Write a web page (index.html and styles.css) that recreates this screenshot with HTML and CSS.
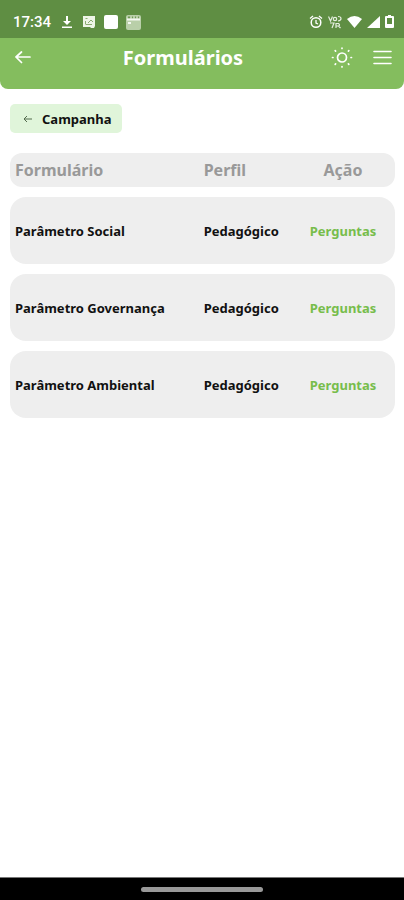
FILE: index.html
```html
<!DOCTYPE html>
<html lang="pt-BR">
<head>
<meta charset="utf-8">
<meta name="viewport" content="width=device-width, initial-scale=1">
<title>Formulários</title>
<link rel="stylesheet" href="styles.css">
</head>
<body>
<div class="status-bar">
  <time class="clock">17:34</time>
  <div class="notifications">
    <svg width="14" height="16" viewBox="0 0 14 16" aria-hidden="true"><path d="M6 2h2v5h3l-4 4-4-4h3zM2 12.500h10V14H2z" fill="#fff"/></svg>
    <svg width="14" height="14" viewBox="0 0 14 14" aria-hidden="true"><path d="M1 1h12v10l-1 2H9l-1-1H1z" fill="#eef5e7"/><path d="M3.500 3.500h2M3.500 9.500V6M4 9.500h6M6 8l3-3 2 2" fill="none" stroke="#8aab71" stroke-width="1"/></svg>
    <svg width="14" height="14" viewBox="0 0 14 14" aria-hidden="true"><rect width="14" height="14" rx="2" fill="#fff"/></svg>
    <svg width="15" height="15" viewBox="0 0 15 15" aria-hidden="true"><rect width="15" height="15" rx="2" fill="#b9cfa9"/><path d="M2 2.500h2M6 2.500h1M9 2.500h1M12 2.500h1" stroke="#6f9854" stroke-width="2"/><path d="M1 4.500h13M2 8h3" stroke="#f4f8f1" stroke-width="2"/></svg>
  </div>
  <div class="indicators">
    <svg width="14" height="14" viewBox="0 0 14 14" fill="none" stroke="#fff" aria-hidden="true"><circle cx="7" cy="7.500" r="4.800" stroke-width="1.500"/><path d="M1 3.500l3-2.500M13 3.500L10 1M7 5v3l2 1" stroke-width="1.300"/></svg>
    <svg width="14" height="14" viewBox="0 0 14 14" fill="none" stroke="#e5eedf" stroke-width="1.200" aria-hidden="true"><path d="M.5 1.500L2.500 6l2-4.500"/><circle cx="7" cy="4" r="1.700"/><path d="M10 1.500q3 0 3 2t-3 2.500M2 8h4L4 13M8 13V8.500h2.500q2 1.500 0 2.500H8M10.500 11l2 2"/></svg>
    <svg width="15" height="14" viewBox="0 0 15 14" aria-hidden="true"><path d="M0 4Q7.500-2 15 4L7.500 13z" fill="#fff"/></svg>
    <svg width="13" height="14" viewBox="0 0 13 14" aria-hidden="true"><path d="M13 1v12H0z" fill="#fff"/></svg>
    <svg width="9" height="14" viewBox="0 0 9 14" aria-hidden="true"><path d="M3 0h3v1h2q1 0 1 1v10q0 1-1 1H1q-1 0-1-1V2q0-1 1-1h2z" fill="#fff"/><path d="M2 3h5v6H2z" fill="#5f8e43"/></svg>
  </div>
</div>
<header class="app-bar">
  <button class="icon-button back" type="button" aria-label="Voltar">
    <svg width="16" height="14" viewBox="0 0 16 14" fill="none" stroke="#fff" stroke-width="1.700" stroke-linecap="round" stroke-linejoin="round"><path d="M15 6H1M6.500 1L1 6l5.500 5.500"/></svg>
  </button>
  <h1 class="title">Formulários</h1>
  <div class="actions">
    <button class="icon-button" type="button" aria-label="Alternar tema">
      <svg width="22" height="22" viewBox="0 0 22 22" fill="none" stroke="#fff" stroke-width="1.700" stroke-linecap="round"><circle cx="11" cy="10.500" r="4.500"/><path d="M11 1v.5M11 19.500v.5M1.500 10.500H2M20 10.500h.5M4.200 3.700l.4.400M17.400 16.900l.4.400M4.200 17.300l.4-.4M17.400 4.100l.4-.4"/></svg>
    </button>
    <button class="icon-button" type="button" aria-label="Menu">
      <svg width="19" height="16" viewBox="0 0 19 16" stroke="#fff" stroke-width="1.600" stroke-linecap="round"><path d="M1 1.500h17M1 7.500h17M1 13.500h17"/></svg>
    </button>
  </div>
</header>
<main class="content">
  <button class="back-chip" type="button">
    <svg width="9" height="8" viewBox="0 0 9 8" fill="none" stroke="#536a4d" stroke-width="1" aria-hidden="true"><path d="M9 4H1M4 1L1 4l3 3"/></svg>
    Campanha
  </button>
  <table class="forms">
    <thead>
      <tr><th class="name" scope="col">Formulário</th><th class="profile" scope="col">Perfil</th><th class="action" scope="col">Ação</th></tr>
    </thead>
    <tbody>
      <tr><td>Parâmetro Social</td><td>Pedagógico</td><td class="action"><a href="#social">Perguntas</a></td></tr>
      <tr><td>Parâmetro Governança</td><td>Pedagógico</td><td class="action"><a href="#governanca">Perguntas</a></td></tr>
      <tr><td>Parâmetro Ambiental</td><td>Pedagógico</td><td class="action"><a href="#ambiental">Perguntas</a></td></tr>
    </tbody>
  </table>
</main>
<div class="nav-bar"><span class="handle"></span></div>
</body>
</html>
```
FILE: styles.css
```css
* {
  box-sizing: border-box;
}

body {
  display: flex;
  flex-direction: column;
  min-height: 100vh;
  margin: 0;
  background: #fff;
  color: #111;
  font-family: "Noto Sans", sans-serif;
}

svg {
  display: block;
}

button {
  border: 0;
  font: inherit;
  color: inherit;
  cursor: pointer;
}

.status-bar {
  display: flex;
  align-items: center;
  height: 38px;
  padding: 6px 10px 0 13px;
  background: #5f8e43;
  color: #fff;
}

.clock {
  font: 500 15px/20px Roboto, sans-serif;
}

.notifications,
.indicators {
  display: flex;
  align-items: center;
  gap: 8px;
}

.notifications {
  margin-left: 9px;
}

.indicators {
  gap: 5px;
  margin-left: auto;
}

.app-bar {
  display: flex;
  align-items: center;
  justify-content: space-between;
  height: 51px;
  padding: 0 12px 12px 15px;
  border-radius: 0 0 8px 8px;
  background: #84bd5e;
}

.title {
  margin: 0;
  color: #fff;
  font-size: 20px;
  line-height: 28px;
}

.icon-button {
  padding: 0;
  background: none;
}

.back {
  width: 20px;
}

.actions {
  display: flex;
  align-items: center;
  gap: 20px;
}

.content {
  flex: 1;
  padding: 15px 9px 15px 10px;
}

.back-chip {
  display: flex;
  align-items: center;
  gap: 10px;
  height: 29px;
  padding: 0 10px 0 13px;
  border-radius: 5px;
  background: #e0f5da;
  font-size: 13px;
  font-weight: 700;
}

.forms {
  width: 100%;
  margin-top: 10px;
  border-spacing: 0 10px;
  table-layout: fixed;
  font-size: 13px;
  font-weight: 700;
}

.forms th,
.forms td {
  padding: 0 0 0 5px;
  background: #eee;
  text-align: left;
}

.forms th {
  height: 34px;
  color: #999;
  font-size: 16px;
  font-weight: 700;
}

.forms td {
  height: 67px;
}

.forms .name {
  width: 49%;
}

.forms .profile {
  width: 24%;
}

.forms .action {
  padding: 0;
  text-align: center;
}

.forms th:first-child {
  border-radius: 12px 0 0 12px;
}

.forms th:last-child {
  border-radius: 0 12px 12px 0;
}

.forms td:first-child {
  border-radius: 16px 0 0 16px;
}

.forms td:last-child {
  border-radius: 0 16px 16px 0;
}

.forms a {
  color: #77bd4b;
  text-decoration: none;
}

.nav-bar {
  display: flex;
  align-items: center;
  justify-content: center;
  height: 23px;
  border-top: 1px solid #777;
  background: #000;
}

.handle {
  width: 30%;
  height: 5px;
  border-radius: 3px;
  background: #999;
}
```
